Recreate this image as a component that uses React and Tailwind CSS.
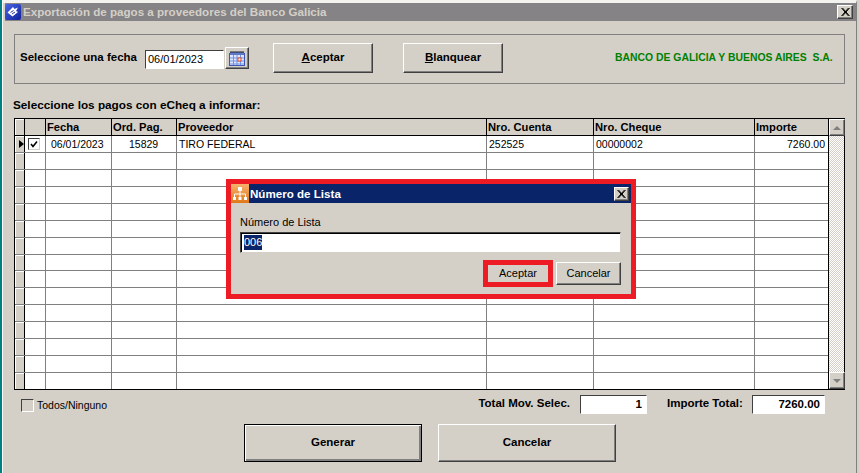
const raised = "border border-t-white border-l-white border-r-[#404040] border-b-[#404040] shadow-[inset_-1px_-1px_0_#808080]";
const sunken = "border border-t-[#404040] border-l-[#404040] border-r-white border-b-white bg-white";
const gridCols = "grid grid-cols-[10px_21px_66px_65px_310px_107px_161px_73px]";
const cellLines = "border-r border-[#808080]";

const columns = ["", "", "Fecha", "Ord. Pag.", "Proveedor", "Nro. Cuenta", "Nro. Cheque", "Importe"];

const Btn = ({ className = "", children }) => (
  <button className={`flex items-center justify-center bg-[#d4d0c8] text-[11.5px] font-bold text-black ${className}`}>
    {children}
  </button>
);

const CalendarIcon = () => (
  <svg width="16" height="15" viewBox="0 0 16 15">
    <rect x="0.5" y="2.5" width="15" height="12" fill="#dfe8fb" stroke="#3f57b0" />
    <rect x="1" y="1" width="14" height="3" fill="#5f78c8" />
    <path d="M2 0v2M4 0v2M6 0v2M8 0v2M10 0v2M12 0v2M14 0v2" stroke="#222" />
    <path d="M1 7h14M1 10h14M1 13h14M4.5 4v10M8 4v10M11.5 4v10" stroke="#6f8fe8" />
    <rect x="9" y="7" width="3" height="3" fill="#fff" stroke="#e04a20" />
  </svg>
);

const GalleryIcon = () => (
  <svg width="18" height="19" viewBox="0 0 18 19">
    <defs>
      <linearGradient id="og" x1="0" y1="0" x2="0" y2="1">
        <stop offset="0" stopColor="#f6b26b" />
        <stop offset="1" stopColor="#e07818" />
      </linearGradient>
    </defs>
    <rect width="18" height="19" fill="url(#og)" />
    <rect x="7" y="3" width="4" height="4" fill="#fff" />
    <path d="M9 7v3M3.5 13v-3h11v3M9 10v3" stroke="#fff" fill="none" />
    <rect x="2" y="13" width="3" height="3" fill="#fff" />
    <rect x="7.5" y="13" width="3" height="3" fill="#fff" />
    <rect x="13" y="13" width="3" height="3" fill="#fff" />
  </svg>
);

const WindowIcon = () => (
  <svg width="16" height="16" viewBox="0 0 16 16">
    <defs>
      <linearGradient id="bl" x1="0" y1="0" x2="1" y2="1">
        <stop offset="0" stopColor="#4a66e8" />
        <stop offset="1" stopColor="#10209a" />
      </linearGradient>
    </defs>
    <rect width="16" height="16" rx="2" fill="url(#bl)" />
    <path d="M2.5 8.5L8 3l1.5 2L13 3.5 11 7l2 1-5.5 4.5z" fill="#fff" />
    <path d="M5.5 8.5l3-2M7 10l3-2" stroke="#2030a0" />
  </svg>
);

const CloseBox = ({ className = "" }) => (
  <div className={`flex items-center justify-center bg-[#d4d0c8] ${raised} ${className}`}>
    <svg width="9" height="8" viewBox="0 0 9 8">
      <path d="M0.5 0l7 8M1.5 0l7 8M7.5 0l-7 8M8.5 0l-7 8" stroke="#000" />
    </svg>
  </div>
);

const Arrow = ({ up }) => (
  <div className={`flex h-[17px] w-[16px] items-center justify-center bg-[#d4d0c8] ${raised}`}>
    <svg width="8" height="4" viewBox="0 0 8 4">
      <path d={up ? "M4 0l4 4H0z" : "M0 0h8L4 4z"} fill="#808080" />
    </svg>
  </div>
);

const GridRow = ({ data = [], current, last }) => (
  <div className={`${gridCols} ${last ? "h-[16px]" : "h-[17px] border-b border-[#808080]"} text-[10.5px] leading-[16px] text-black`}>
    <div className="flex items-center border-r border-black bg-[#d4d0c8] pl-[4px] shadow-[inset_1px_1px_0_#fff]">
      {current && (
        <svg width="5" height="8" viewBox="0 0 5 8">
          <path d="M0 0l5 4-5 4z" fill="#000" />
        </svg>
      )}
    </div>
    <div className={`flex items-center pl-[3px] ${cellLines}`}>
      {current && (
        <div className="flex h-[12px] w-[12px] items-center justify-center border border-t-[#404040] border-l-[#404040] border-r-[#d4d0c8] border-b-[#d4d0c8] bg-white">
          <svg width="8" height="7" viewBox="0 0 8 7">
            <path d="M1 3l2 2.5L7 0.5" stroke="#000" strokeWidth="1.6" fill="none" />
          </svg>
        </div>
      )}
    </div>
    <div className={`pl-[5px] ${cellLines}`}>{data[0]}</div>
    <div className={`pl-[17px] ${cellLines}`}>{data[1]}</div>
    <div className={`pl-[2px] ${cellLines}`}>{data[2]}</div>
    <div className={`pl-[2px] ${cellLines}`}>{data[3]}</div>
    <div className={`pl-[2px] ${cellLines}`}>{data[4]}</div>
    <div className="pr-[3px] text-right">{data[5]}</div>
  </div>
);

export default function App() {
  const emptyRows = Array.from({ length: 14 });
  return (
    <div className="relative flex h-[473px] w-[859px] bg-[#d4d0c8] font-['Liberation_Sans',Arial,sans-serif]">
      <div className="w-[2px] bg-[#008080]" />
      <div className="flex flex-1 flex-col border-l border-t-[3px] border-r border-l-white border-t-[#f4f2ee] border-r-[#808080] pl-[2px]">
        {/* barra de titulo */}
        <div className="flex h-[18px] items-center justify-between bg-[#858385] pr-[3px]">
          <div className="flex items-center gap-[2px] text-[11.6px] font-bold text-[#d4d0c8]">
            <WindowIcon />
            <span>Exportación de pagos a proveedores del Banco Galicia</span>
          </div>
          <CloseBox className="h-[14px] w-[16px]" />
        </div>

        <div className="flex flex-col pl-[9px]">
          {/* filtro */}
          <div className="mt-[13px] flex h-[50px] w-[831px] items-center border border-[#808080] pl-[5px]">
            <span className="mb-[2px] w-[125px] text-[11.5px] font-bold text-black">Seleccione una fecha</span>
            <div className={`flex h-[19px] w-[79px] items-center pl-[2px] text-[11px] text-black ${sunken}`}>06/01/2023</div>
            <div className={`mb-[2px] ml-[1px] flex h-[22px] w-[24px] items-center justify-center bg-[#d4d0c8] ${raised}`}>
              <CalendarIcon />
            </div>
            <Btn className={`mb-[2px] ml-[24px] h-[30px] w-[100px] ${raised}`}>
              <span><u>A</u>ceptar</span>
            </Btn>
            <Btn className={`mb-[2px] ml-[30px] h-[30px] w-[100px] ${raised}`}>
              <span><u>B</u>lanquear</span>
            </Btn>
            <span className="mb-[3px] ml-[112px] whitespace-pre text-[10.4px] font-bold text-[#008000]">BANCO DE GALICIA Y BUENOS AIRES  S.A.</span>
          </div>

          <div className="ml-[-1px] mt-[13px] h-[15px] text-[11.75px] font-bold leading-[15px] text-black">
            Seleccione los pagos con eCheq a informar:
          </div>

          {/* grilla */}
          <div className="mt-[6px] flex h-[272px] w-[831px] border border-black bg-white">
            <div className="flex w-[813px] flex-col">
              <div className={`${gridCols} h-[17px] border-b border-black bg-[#d4d0c8] text-[11.2px] font-bold leading-[16px] text-black`}>
                {columns.map((col, i) => (
                  <div key={i} className={`pl-[1px] ${i === 7 ? "" : i === 0 ? "border-r border-black shadow-[inset_1px_1px_0_#fff]" : "border-r border-black"}`}>
                    {col}
                  </div>
                ))}
              </div>
              <GridRow current data={["06/01/2023", "15829", "TIRO FEDERAL", "252525", "00000002", "7260.00"]} />
              {emptyRows.map((_, i) => (
                <GridRow key={i} last={i === emptyRows.length - 1} />
              ))}
            </div>
            <div className="flex w-[16px] flex-col justify-between border-l border-black bg-[repeating-conic-gradient(#d4d0c8_0_25%,#ffffff_0_50%)] bg-[length:2px_2px]">
              <Arrow up />
              <Arrow />
            </div>
          </div>

          {/* totales */}
          <div className="mt-[4px] flex h-[20px] items-center whitespace-nowrap">
            <div className="ml-[7px] mt-[3px] h-[13px] w-[13px] border border-t-[#404040] border-l-[#404040] border-r-white border-b-white bg-[#d4d0c8]" />
            <span className="ml-[3px] mt-[3px] w-[441px] text-[10.5px] text-black">Todos/Ninguno</span>
            <span className="w-[92px] text-right text-[11.5px] font-bold text-black">Total Mov. Selec.</span>
            <div className={`ml-[10px] h-[19px] w-[67px] pr-[4px] text-right text-[11.5px] font-bold leading-[17px] text-black ${sunken}`}>1</div>
            <span className="ml-[20px] w-[78px] text-[11.5px] font-bold text-black">Importe Total:</span>
            <div className={`ml-[7px] h-[19px] w-[73px] pr-[4px] text-right text-[11.5px] font-bold leading-[17px] text-black ${sunken}`}>7260.00</div>
          </div>

          <div className="ml-[230px] mt-[10px] flex gap-[16px]">
            <Btn className="h-[38px] w-[178px] border border-black shadow-[inset_1px_1px_0_#fff,inset_-1px_-1px_0_#808080,inset_-2px_-2px_0_#808080]">Generar</Btn>
            <Btn className={`h-[38px] w-[178px] ${raised}`}>Cancelar</Btn>
          </div>
        </div>
      </div>
      <div className="w-[2px] bg-[#d4d0c8]" />

      {/* dialogo */}
      <div className="absolute left-[226px] top-[179px] flex h-[120px] w-[410px] flex-col border-[5px] border-[#ed1c24] bg-[#d4d0c8]">
        <div className="flex h-[19px] items-center justify-between bg-[#0a246a] pr-[2px]">
          <div className="flex items-center gap-[1px] text-[11.6px] font-bold text-white">
            <GalleryIcon />
            <span>Número de Lista</span>
          </div>
          <CloseBox className="h-[14px] w-[15px]" />
        </div>
        <div className="flex flex-1 flex-col pl-[9px] pr-[10px]">
          <div className="mt-[12px] text-[11px] leading-[14px] text-black">Número de Lista</div>
          <div className="mt-[3px] flex h-[21px] items-center border border-t-[#404040] border-l-[#404040] border-r-[#d4d0c8] border-b-[#d4d0c8] bg-white pl-[3px] shadow-[inset_1px_1px_0_#000]">
            <span className="bg-[#0a246a] text-[11px] leading-[15px] text-white">006</span>
          </div>
          <div className="mt-[7px] flex items-center justify-end gap-[3px]">
            <div className="border-[5px] border-[#ed1c24]">
              <div className="flex h-[17px] w-[60px] items-center justify-center text-[11px] text-black">Aceptar</div>
            </div>
            <button className={`h-[23px] w-[65px] bg-[#d4d0c8] text-[11px] text-black ${raised}`}>Cancelar</button>
          </div>
        </div>
      </div>
    </div>
  );
}
